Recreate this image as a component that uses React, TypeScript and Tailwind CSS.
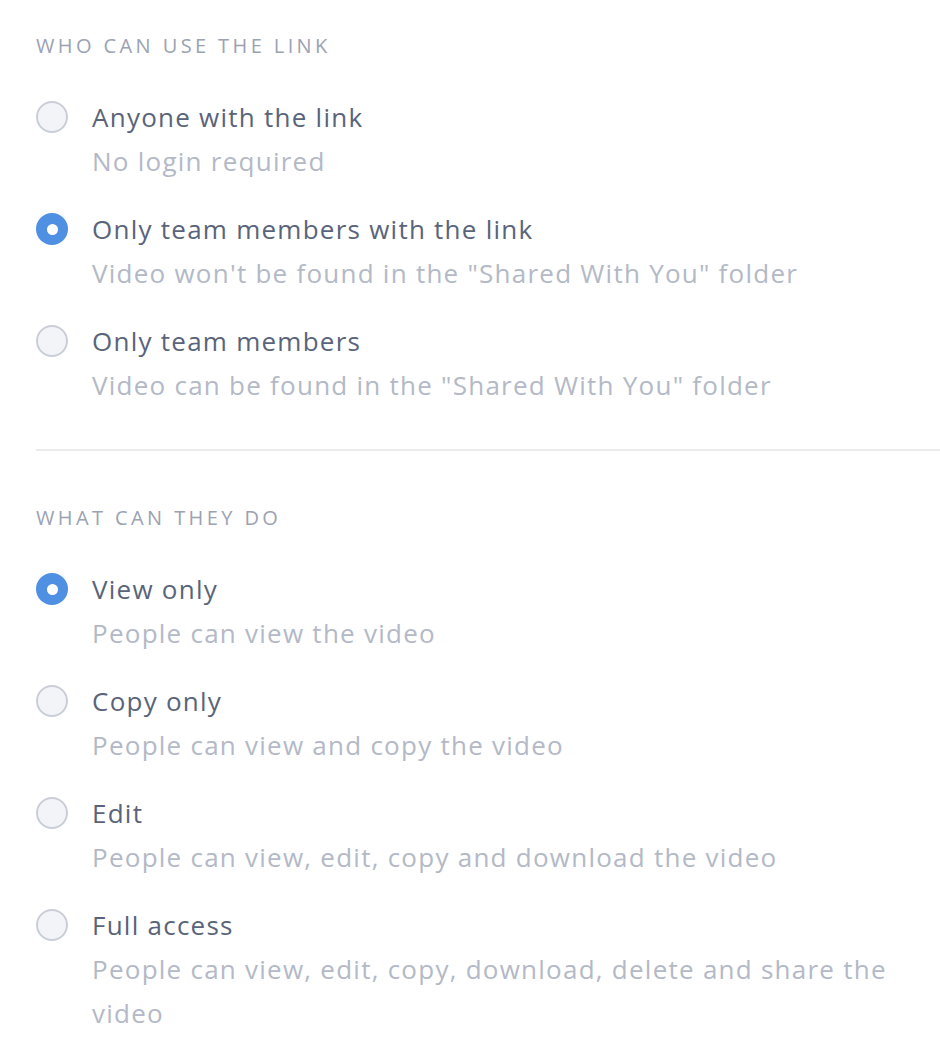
import { useState } from 'react';

type Option = { id: string; title: string; description: string };

const whoOptions: Option[] = [
  { id: 'anyone', title: 'Anyone with the link', description: 'No login required' },
  {
    id: 'team-link',
    title: 'Only team members with the link',
    description: 'Video won\'t be found in the "Shared With You" folder',
  },
  {
    id: 'team',
    title: 'Only team members',
    description: 'Video can be found in the "Shared With You" folder',
  },
];

const whatOptions: Option[] = [
  { id: 'view', title: 'View only', description: 'People can view the video' },
  { id: 'copy', title: 'Copy only', description: 'People can view and copy the video' },
  { id: 'edit', title: 'Edit', description: 'People can view, edit, copy and download the video' },
  {
    id: 'full',
    title: 'Full access',
    description: 'People can view, edit, copy, download, delete and share the video',
  },
];

function Radio({ checked }: { checked: boolean }) {
  return checked ? (
    <span className="mt-[6px] flex h-8 w-8 shrink-0 items-center justify-center rounded-full bg-[#4f90e3]">
      <span className="h-[11px] w-[11px] rounded-full bg-white" />
    </span>
  ) : (
    <span className="mt-[6px] h-8 w-8 shrink-0 rounded-full border-2 border-[#c9ced7] bg-[#f3f4f7]" />
  );
}

function RadioGroup({
  label,
  options,
  value,
  onChange,
}: {
  label: string;
  options: Option[];
  value: string;
  onChange: (id: string) => void;
}) {
  return (
    <section>
      <h3 className="text-[20px] leading-[28px] tracking-[3.4px] text-[#9ba2b2]">{label}</h3>

      <div className="mt-[35px] flex flex-col gap-6">
        {options.map((option) => (
          <button
            key={option.id}
            type="button"
            onClick={() => onChange(option.id)}
            className="flex items-start gap-6 text-left"
          >
            <Radio checked={value === option.id} />
            <span className="flex flex-col tracking-[1.25px]">
              <span className="text-[26px] leading-[44px] text-[#59647a]">{option.title}</span>
              <span className="text-[26px] leading-[44px] text-[#b3b9c6]">{option.description}</span>
            </span>
          </button>
        ))}
      </div>
    </section>
  );
}

export default function App() {
  const [who, setWho] = useState('team-link');
  const [what, setWhat] = useState('view');

  return (
    <div className="min-h-[1050px] w-[940px] bg-white pl-9 pt-8 font-['Open_Sans',sans-serif]">
      <RadioGroup label="WHO CAN USE THE LINK" options={whoOptions} value={who} onChange={setWho} />

      <div className="mt-[42px] h-[2px] bg-[#ebebeb]" />

      <div className="mt-[53px]">
        <RadioGroup label="WHAT CAN THEY DO" options={whatOptions} value={what} onChange={setWhat} />
      </div>
    </div>
  );
}
